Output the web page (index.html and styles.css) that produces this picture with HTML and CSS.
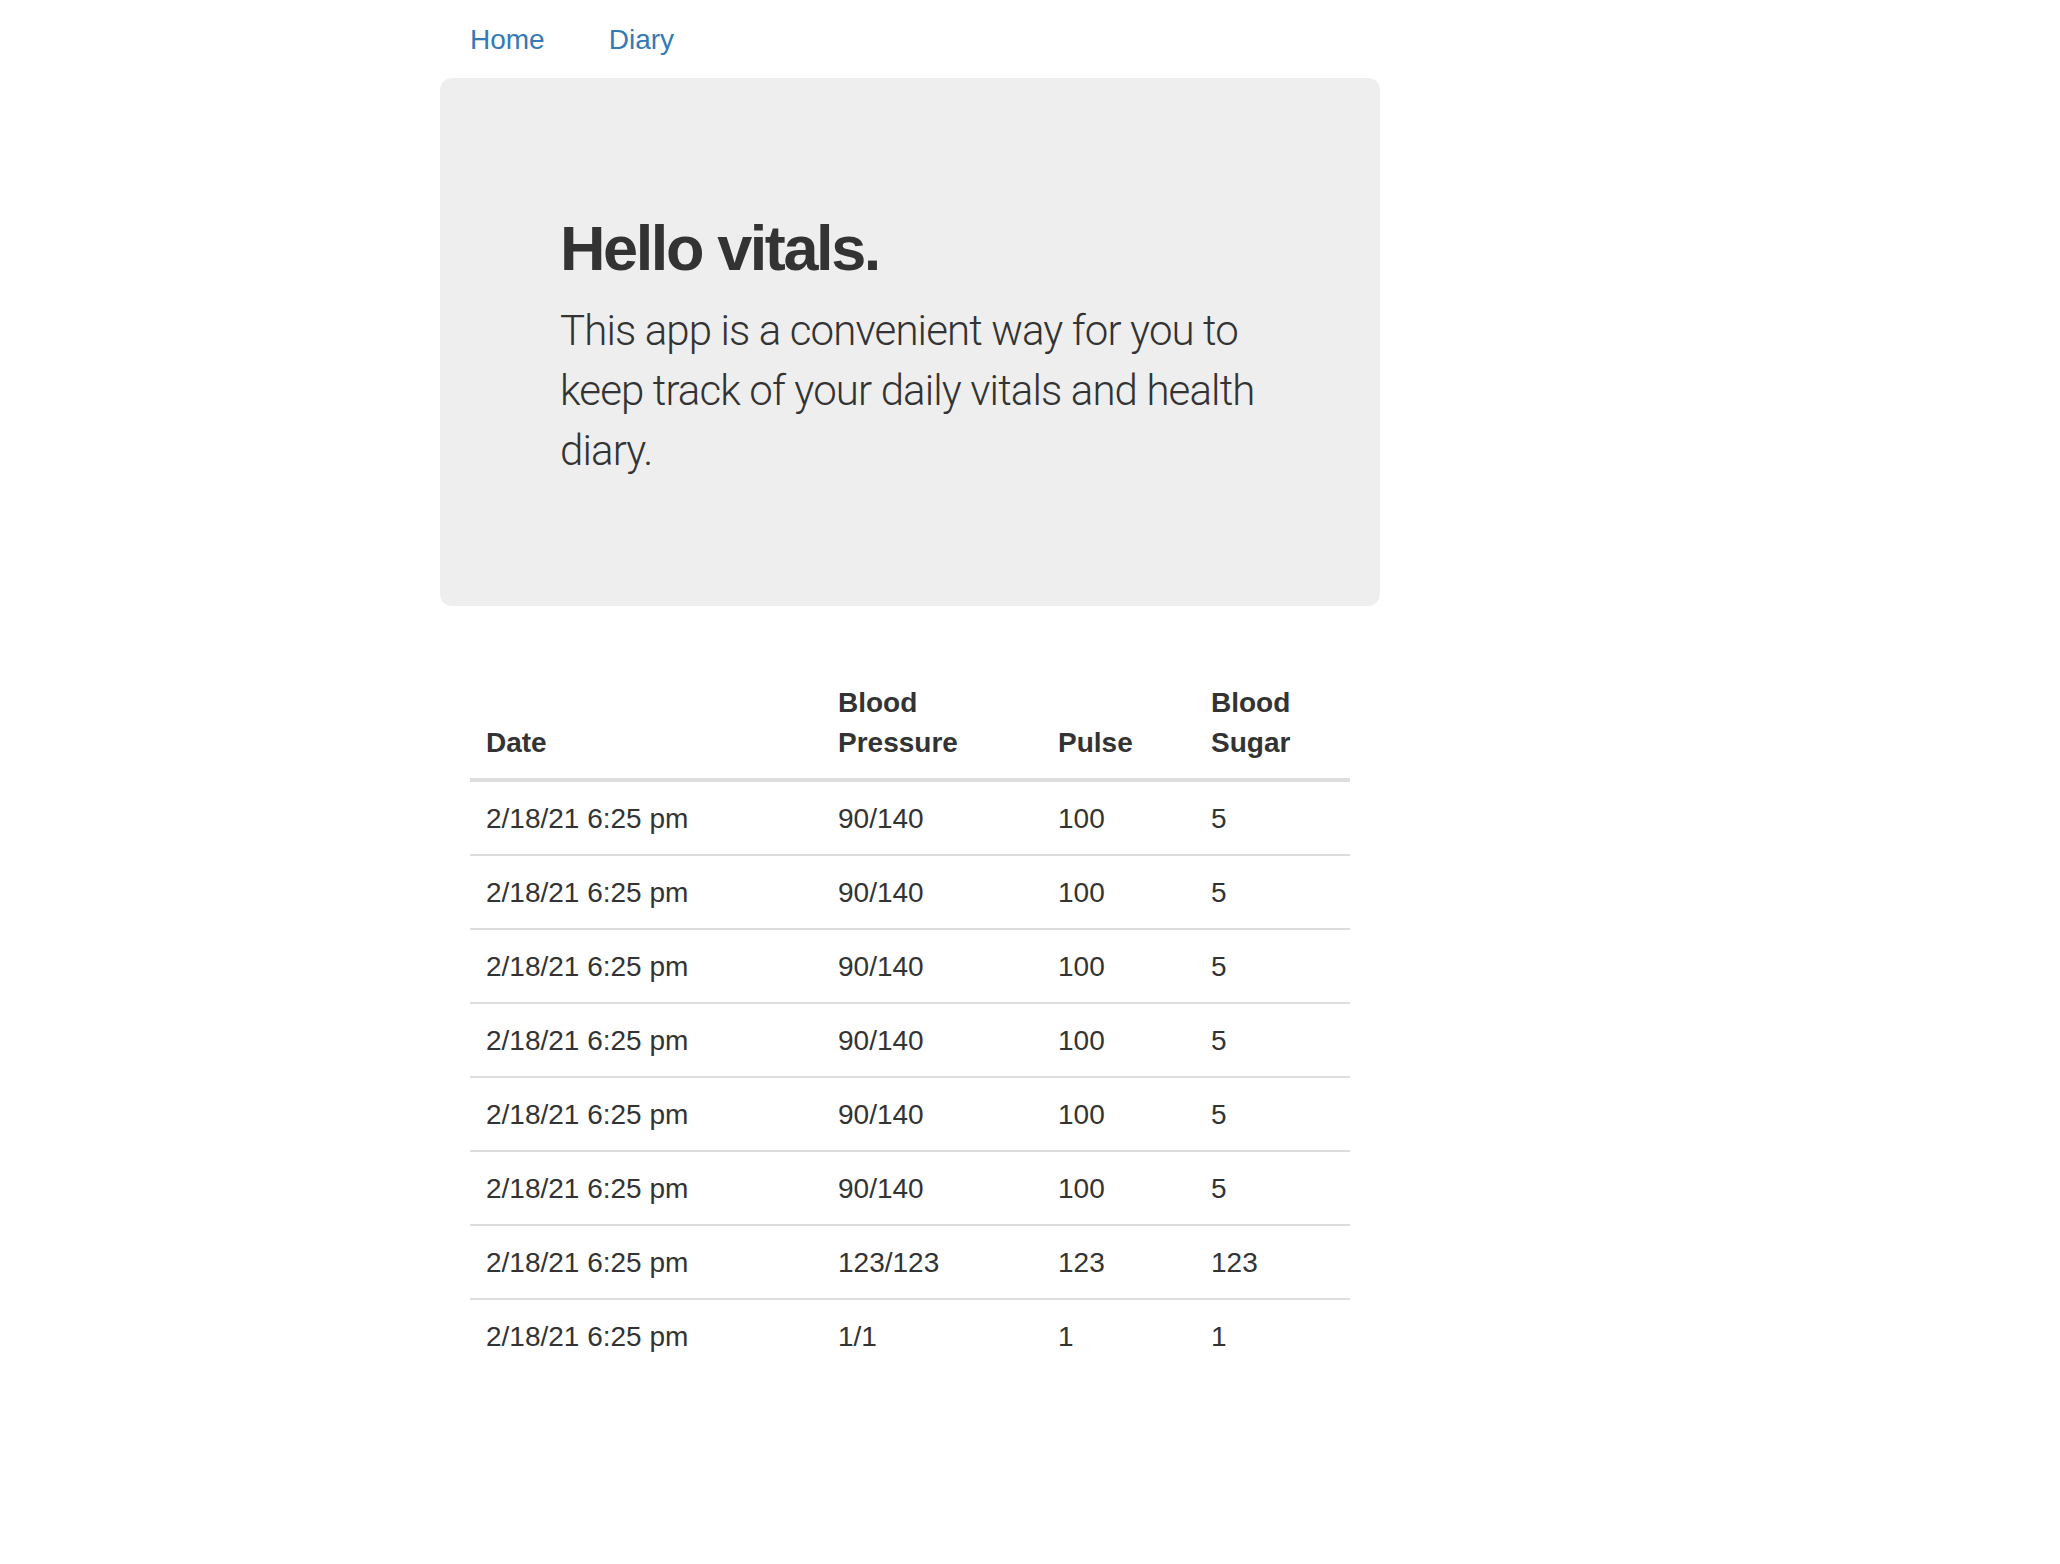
FILE: index.html
```html
<!DOCTYPE html>
<html lang="en">
<head>
<meta charset="utf-8">
<title>Vitals</title>
<link rel="stylesheet" href="styles.css">
</head>
<body>
<div class="page">
  <nav class="nav">
    <a class="nav-link" href="#">Home</a>
    <a class="nav-link" href="#">Diary</a>
  </nav>
  <section class="jumbotron">
    <h1 class="jumbo-title">Hello vitals.</h1>
    <p class="lead">This app is a convenient way for you to keep track of your daily vitals and health diary.</p>
  </section>
  <div class="table-wrap">
    <table class="vitals">
      <colgroup>
        <col class="c-date">
        <col class="c-bp">
        <col class="c-pulse">
        <col class="c-sugar">
      </colgroup>
      <thead>
        <tr><th>Date</th><th>Blood Pressure</th><th>Pulse</th><th>Blood Sugar</th></tr>
      </thead>
      <tbody>
        <tr><td>2/18/21 6:25 pm</td><td>90/140</td><td>100</td><td>5</td></tr>
        <tr><td>2/18/21 6:25 pm</td><td>90/140</td><td>100</td><td>5</td></tr>
        <tr><td>2/18/21 6:25 pm</td><td>90/140</td><td>100</td><td>5</td></tr>
        <tr><td>2/18/21 6:25 pm</td><td>90/140</td><td>100</td><td>5</td></tr>
        <tr><td>2/18/21 6:25 pm</td><td>90/140</td><td>100</td><td>5</td></tr>
        <tr><td>2/18/21 6:25 pm</td><td>90/140</td><td>100</td><td>5</td></tr>
        <tr><td>2/18/21 6:25 pm</td><td>123/123</td><td>123</td><td>123</td></tr>
        <tr><td>2/18/21 6:25 pm</td><td>1/1</td><td>1</td><td>1</td></tr>
      </tbody>
    </table>
  </div>
</div>
</body>
</html>
```
FILE: styles.css
```css
html, body {
  margin: 0;
  padding: 0;
  background: #fff;
}
body {
  font-family: "Liberation Sans", Arial, Helvetica, sans-serif;
  font-size: 28px;
  line-height: 40px;
  color: #333;
}
.page {
  width: 940px;
  margin-left: 440px;
}
.nav {
  display: flex;
  gap: 4px;
}
.nav-link {
  display: block;
  padding: 20px 30px 18px;
  line-height: 40px;
  color: #337ab7;
  text-decoration: none;
}
.jumbotron {
  background: #eeeeee;
  border-radius: 12px;
  padding: 96px 120px 95px;
  margin-bottom: 60px;
}
.jumbo-title {
  margin: 40px 0 18px;
  font-size: 63px;
  line-height: 69px;
  font-weight: bold;
  letter-spacing: -2.4px;
  color: #333;
}
.lead {
  margin: 0 0 30px;
  font-family: Roboto, "Liberation Sans", sans-serif;
  font-weight: 300;
  font-size: 42px;
  line-height: 60px;
  letter-spacing: -0.88px;
  color: #333;
}
.table-wrap {
  padding: 0 30px;
}
.vitals {
  width: 880px;
  border-collapse: collapse;
  border-spacing: 0;
  table-layout: fixed;
}
.c-date { width: 352px; }
.c-bp { width: 220px; }
.c-pulse { width: 153px; }
.c-sugar { width: 155px; }
.vitals th {
  text-align: left;
  vertical-align: bottom;
  font-weight: bold;
  padding: 17px 16px 15px;
  line-height: 40px;
  border-bottom: 4px solid #ddd;
}
.vitals td {
  vertical-align: top;
  padding: 17px 16px 15px;
  line-height: 40px;
  border-top: 2px solid #ddd;
}
.vitals tbody tr:first-child td {
  border-top: 0;
}
```
